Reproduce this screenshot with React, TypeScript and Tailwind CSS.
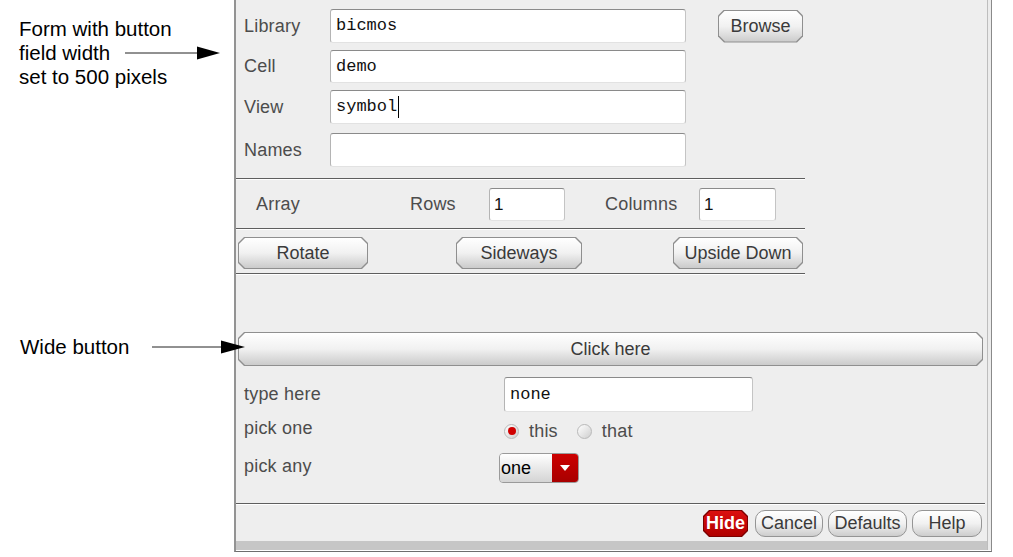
import type { ReactNode } from 'react'

const CHAMFER =
  '[clip-path:polygon(6px_0,calc(100%_-_6px)_0,100%_6px,100%_calc(100%_-_6px),calc(100%_-_6px)_100%,6px_100%,0_calc(100%_-_6px),0_6px)]'

const LABEL = 'text-[18px] tracking-[0.2px] text-[#4c4c4c]'
const MONO = "font-['Liberation_Mono','DejaVu_Sans_Mono',monospace]"

type BevelProps = {
  children: ReactNode
  className?: string
  red?: boolean
}

function Bevel({ children, className = '', red = false }: BevelProps) {
  return (
    <div className={`p-px ${CHAMFER} ${red ? 'bg-[#7c0000]' : 'bg-[#8f8f8f]'} ${className}`}>
      <div
        className={`flex h-full w-full items-center justify-center ${CHAMFER} text-[18px] ${
          red
            ? 'bg-linear-to-b from-[#dc1010] to-[#b00000] font-bold text-white'
            : 'bg-linear-to-b from-white via-[#f1f1f1] to-[#cbcbcb] text-[#3a3a3a]'
        }`}
      >
        {children}
      </div>
    </div>
  )
}

function RoundButton({ children, className = '' }: { children: ReactNode; className?: string }) {
  return (
    <div
      className={`flex items-center justify-center rounded-[10px] border border-[#959595] bg-linear-to-b from-white via-[#f1f1f1] to-[#cdcdcd] text-[18px] text-[#3a3a3a] ${className}`}
    >
      {children}
    </div>
  )
}

type FieldProps = {
  value?: string
  className?: string
  mono?: boolean
  cursor?: boolean
}

function Field({ value = '', className = '', mono = true, cursor = false }: FieldProps) {
  return (
    <div
      className={`flex items-center rounded-[3px] border border-t-[#8a8a8a] border-l-[#b4b4b4] border-r-[#c4c4c4] border-b-[#e2e2e2] bg-white ${className}`}
    >
      <span className={`${mono ? MONO : ''} text-[17px] text-[#111]`}>{value}</span>
      {cursor ? <span className="ml-px h-[22px] w-px bg-black" /> : null}
    </div>
  )
}

function Separator({ className = '' }: { className?: string }) {
  return <div className={`h-[2px] border-t border-[#5e5e5e] bg-white ${className}`} />
}

function Radio({ checked }: { checked: boolean }) {
  return (
    <span className="flex h-[15px] w-[15px] items-center justify-center rounded-full border border-[#b9b9b9] bg-linear-to-br from-[#ffffff] to-[#cfcfcf]">
      {checked ? <span className="h-[8px] w-[8px] rounded-full bg-[#d00000]" /> : null}
    </span>
  )
}

function Arrow({ width, head }: { width: number; head: number }) {
  return (
    <svg width={width} height={14} viewBox={`0 0 ${width} 14`} className="relative z-10 shrink-0">
      <line x1={0} y1={7} x2={width - head} y2={7} stroke="#222" strokeWidth={1} />
      <polygon points={`${width - head},0.5 ${width},7 ${width - head},13.5`} fill="#000" />
    </svg>
  )
}

const formRows = [
  { label: 'Library', value: 'bicmos', mt: 'mt-[9px]', h: 'h-[34px]' },
  { label: 'Cell', value: 'demo', mt: 'mt-[7px]', h: 'h-[33px]' },
  { label: 'View', value: 'symbol', mt: 'mt-[7px]', h: 'h-[34px]', cursor: true },
  { label: 'Names', value: '', mt: 'mt-[9px]', h: 'h-[34px]' },
]

export default function App() {
  return (
    <div className="flex h-[557px] w-[1013px] overflow-hidden bg-white font-['Liberation_Sans',Arial,sans-serif]">
      {/* annotations */}
      <div className="flex w-[234px] shrink-0 flex-col">
        <div className="pl-[19px] pt-[17px] text-[20.5px] leading-[24px] text-black">
          <div>Form with button</div>
          <div className="flex items-center">
            <span className="w-[106px] shrink-0">field width</span>
            <Arrow width={95} head={23} />
          </div>
          <div>set to 500 pixels</div>
        </div>
        <div className="mt-[246px] flex items-center pl-[20px] text-[20.5px] leading-[24px] text-black">
          <span className="w-[132px] shrink-0">Wide button</span>
          <Arrow width={93} head={24} />
        </div>
      </div>

      {/* form panel */}
      <div className="flex h-[552px] w-[758px] shrink-0 flex-col border-b border-l-2 border-r border-b-[#6e6e6e] border-l-[#939393] border-r-[#8a8a8a] bg-[#ececec]">
        <div className="mr-[3px] flex flex-1 flex-col border-r border-[#bdbdbd] bg-[#eeeeee]">
          {formRows.map((row, i) => (
            <div key={row.label} className={`flex items-center ${row.mt} ${row.h}`}>
              <span className={`w-[94px] shrink-0 pl-[8px] ${LABEL}`}>{row.label}</span>
              <Field value={row.value} cursor={row.cursor} className="h-full w-[356px] pl-[5px]" />
              {i === 0 ? <Bevel className="ml-[32px] h-[33px] w-[85px]">Browse</Bevel> : null}
            </div>
          ))}

          <Separator className="mt-[11px] w-[569px]" />

          <div className="mt-[8px] flex h-[33px] items-center">
            <span className={`w-[174px] shrink-0 pl-[20px] ${LABEL}`}>Array</span>
            <span className={`w-[79px] shrink-0 ${LABEL}`}>Rows</span>
            <Field value="1" mono={false} className="h-full w-[76px] pl-[4px]" />
            <span className={`ml-[40px] w-[94px] shrink-0 ${LABEL}`}>Columns</span>
            <Field value="1" mono={false} className="h-full w-[77px] pl-[4px]" />
          </div>

          <Separator className="mt-[7px] w-[569px]" />

          <div className="mt-[7px] flex h-[32px]">
            <Bevel className="ml-[2px] h-full w-[130px]">Rotate</Bevel>
            <Bevel className="ml-[88px] h-full w-[126px]">Sideways</Bevel>
            <Bevel className="ml-[91px] h-full w-[130px]">Upside Down</Bevel>
          </div>

          <Separator className="mt-[4px] w-[569px]" />

          <Bevel className="ml-[2px] mt-[57px] h-[34px] w-[745px]">Click here</Bevel>

          <div className="mt-[11px] flex h-[35px] items-center">
            <span className={`w-[268px] shrink-0 pl-[8px] ${LABEL}`}>type here</span>
            <Field value="none" className="h-full w-[249px] pl-[5px]" />
          </div>

          <div className="mt-[3px] flex h-[32px] items-center">
            <span className={`mb-[6px] w-[268px] shrink-0 pl-[8px] ${LABEL}`}>pick one</span>
            <div className="flex items-center">
              <Radio checked />
              <span className={`ml-[10px] ${LABEL}`}>this</span>
              <span className="ml-[19px]">
                <Radio checked={false} />
              </span>
              <span className={`ml-[10px] ${LABEL}`}>that</span>
            </div>
          </div>

          <div className="mt-[6px] flex h-[30px] items-center">
            <span className={`mb-[4px] w-[263px] shrink-0 pl-[8px] ${LABEL}`}>pick any</span>
            <div className="flex h-full w-[80px] overflow-hidden rounded-[4px] border border-[#9a9a9a]">
              <div className="flex flex-1 items-center bg-linear-to-b from-white to-[#d4d4d4] pl-[1px] text-[18px] text-black">
                one
              </div>
              <div className="flex w-[26px] items-center justify-center bg-linear-to-b from-[#cc0000] to-[#a80000]">
                <svg width="10" height="6" viewBox="0 0 10 6">
                  <polygon points="0,0 10,0 5,6" fill="#fff" />
                </svg>
              </div>
            </div>
          </div>

          <Separator className="mt-[20px] w-[749px]" />

          <div className="mt-[5px] flex h-[27px] justify-end gap-[5px] pr-[5px]">
            <Bevel red className="mr-[2px] h-full w-[45px]">
              Hide
            </Bevel>
            <RoundButton className="h-full w-[68px]">Cancel</RoundButton>
            <RoundButton className="h-full w-[79px]">Defaults</RoundButton>
            <RoundButton className="h-full w-[70px]">Help</RoundButton>
          </div>

          <div className="mt-[4px] h-[9px] bg-[#c6c6c6]" />
        </div>
        <div className="h-px bg-white" />
      </div>
    </div>
  )
}
